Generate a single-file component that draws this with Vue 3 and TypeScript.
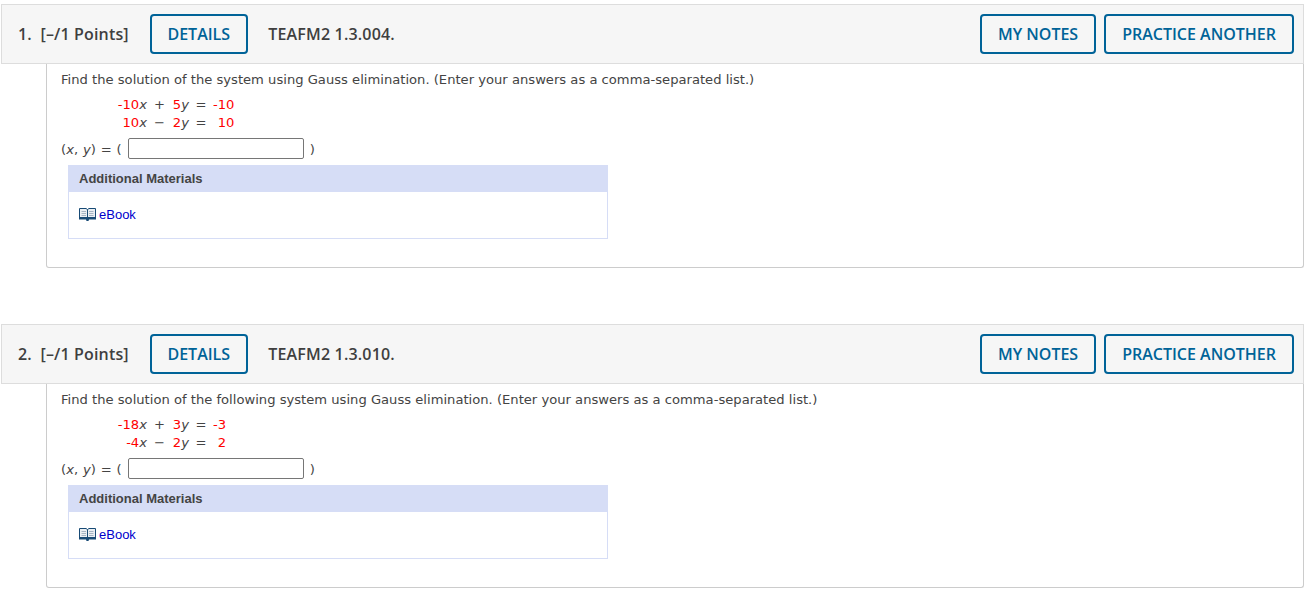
<script setup lang="ts">
interface Eq { a: string; op: string; b: string; r: string }
interface Q { n: number; code: string; text: string; eqs: Eq[] }
const questions: Q[] = [
  { n: 1, code: 'TEAFM2 1.3.004.', text: 'Find the solution of the system using Gauss elimination. (Enter your answers as a comma-separated list.)',
    eqs: [{ a: '-10', op: '+', b: '5', r: '-10' }, { a: '10', op: '−', b: '2', r: '10' }] },
  { n: 2, code: 'TEAFM2 1.3.010.', text: 'Find the solution of the following system using Gauss elimination. (Enter your answers as a comma-separated list.)',
    eqs: [{ a: '-18', op: '+', b: '3', r: '-3' }, { a: '-4', op: '−', b: '2', r: '2' }] },
]
</script>

<template>
  <div class="page">
    <section v-for="q in questions" :key="q.n" class="question">
      <header class="head">
        <span class="num">{{ q.n }}.</span>
        <span class="pts">[–/1 Points]</span>
        <button class="btn details">DETAILS</button>
        <span class="code">{{ q.code }}</span>
        <button class="btn notes">MY NOTES</button>
        <button class="btn">PRACTICE ANOTHER</button>
      </header>
      <div class="body">
        <p class="text">{{ q.text }}</p>
        <table class="eqs">
          <tbody>
            <tr v-for="(e, i) in q.eqs" :key="i">
              <td class="c1"><span class="red">{{ e.a }}</span><i>x</i></td>
              <td class="c2">{{ e.op }}</td>
              <td class="c3"><span class="red">{{ e.b }}</span><i>y</i></td>
              <td class="c4">=</td>
              <td class="c5 red">{{ e.r }}</td>
            </tr>
          </tbody>
        </table>
        <div class="answer">
          <span class="expr">(<i>x</i>, <i>y</i>) = (</span>
          <input class="field" type="text" />
          <span class="expr">)</span>
        </div>
        <div class="materials">
          <div class="mat-head">Additional Materials</div>
          <div class="mat-body">
            <svg class="book" width="17" height="14" viewBox="0 0 17 14">
              <path d="M0.500 1.500 H7 L8.500 2.500 L10 1.500 H16.500 V11.500 H0.500 Z" fill="#e9eef2" stroke="#174a75" />
              <path d="M8.500 2.500 V11.500" stroke="#174a75" />
              <path d="M2.500 4.500 H7 M2.500 6.500 H7 M2.500 8.500 H7 M10 4.500 H14.500 M10 6.500 H14.500 M10 8.500 H14.500" stroke="#a5b4c2" />
              <path d="M0 10 H17 V12.500 H10 L9.500 14 H7.500 L7 12.500 H0 Z" fill="#174a75" />
            </svg>
            <a class="link">eBook</a>
          </div>
        </div>
      </div>
    </section>
  </div>
</template>

<style>
html, body { margin: 0; background: #fff; }
</style>

<style scoped>
.page { display: flex; flex-direction: column; gap: 56px; padding: 4px 7px 0 1px; }
.head {
  display: flex;
  align-items: center;
  box-sizing: border-box;
  height: 60px;
  padding: 0 9px 0 16px;
  background: #f6f6f6;
  border: 1px solid #ddd;
  font: 600 16px "Open Sans", sans-serif;
  color: #3f3f3f;
}
.num { margin-right: 9px; }
.pts { margin-right: 21px; letter-spacing: 0.15px; }
.code { margin-left: 20.5px; margin-right: auto; letter-spacing: 0.17px; }
.btn {
  box-sizing: border-box;
  height: 40px;
  padding: 0 16px;
  border: 2px solid #006398;
  border-radius: 4px;
  background: transparent;
  font: 600 16px "Open Sans", sans-serif;
  color: #006398;
}
.details { width: 98px; padding: 0; }
.notes { margin-right: 8px; }
.body {
  box-sizing: border-box;
  height: 204px;
  margin-left: 45px;
  padding: 7px 0 0 14px;
  border: 1px solid #ccc;
  border-top: 0;
  border-radius: 0 0 3px 3px;
  font: 13.14px "DejaVu Sans", sans-serif;
  color: #444;
}
.text { margin: 0; line-height: 18px; }
.eqs { margin: 7px 0 0 52px; border-collapse: collapse; line-height: 18px; }
.eqs td { padding: 0; text-align: right; white-space: pre; }
.c1 { width: 34px; }
.c2 { width: 25px; text-align: center !important; }
.c3 { width: 17px; }
.c4 { width: 24px; text-align: center !important; }
.red { color: #f00; }
.answer { display: flex; align-items: center; gap: 6px; height: 22px; margin-top: 5px; }
.expr { word-spacing: 0.67px; position: relative; top: 1px; }
.field {
  box-sizing: border-box;
  width: 176px;
  height: 21px;
  margin: 0;
  padding: 0;
  background: #fff;
  border: 1px solid #767676;
  border-radius: 2px;
}
.materials {
  box-sizing: border-box;
  width: 540px;
  height: 74px;
  margin: 6px 0 0 7px;
  border: 1px solid #d6ddf6;
  border-top: 0;
}
.mat-head {
  height: 27px;
  margin: 0 -1px;
  padding-left: 11px;
  background: #d6ddf6;
  font: bold 13px/27px "Liberation Sans", sans-serif;
  color: #444;
}
.mat-body { display: flex; align-items: center; gap: 3px; height: 44px; padding-left: 10px; }
.book { display: block; }
.link { font: 13px "Liberation Sans", sans-serif; color: #00c; }
</style>
